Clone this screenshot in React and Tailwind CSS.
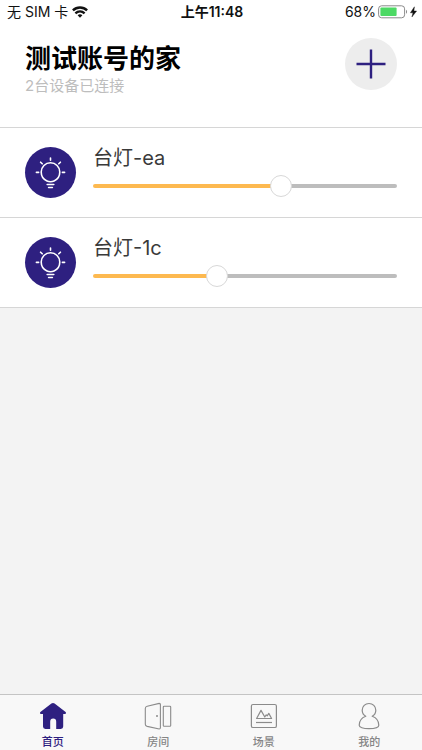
import { useState } from "react";

function WifiIcon() {
  return (
    <svg width="16" height="12" viewBox="0 0 16 12" fill="none" stroke="#111" strokeWidth="2.4" aria-hidden="true">
      <path d="M0.9 4.4C4.9 0.5 11.1 0.5 15.1 4.4" />
      <path d="M3.4 7.3C6.1 4.8 9.9 4.8 12.6 7.3" />
      <path d="M5.6 9.2C7.1 7.9 8.9 7.9 10.4 9.2L8 11.7Z" fill="#111" stroke="none" />
    </svg>
  );
}

function BatteryIcon() {
  return (
    <svg width="39" height="14" viewBox="0 0 39 14" fill="none" aria-hidden="true">
      <rect x="0.6" y="0.8" width="26" height="12" rx="3" fill="#fff" stroke="#8a8a8a" />
      <rect x="2.4" y="2.6" width="16.2" height="8.4" rx="1" fill="#4cd964" />
      <path d="M28 4.8C29.4 5.4 29.4 8.2 28 8.8Z" fill="#8a8a8a" />
      <path d="M36.4 1.8L32.4 7.8H35L33.9 12L38.6 6H35.9Z" fill="#111" stroke="#111" strokeWidth="0.4" />
    </svg>
  );
}

function BulbIcon() {
  return (
    <svg width="51" height="51" viewBox="0 0 51 51" fill="none" stroke="#fff" strokeWidth="1.6" strokeLinecap="round" aria-hidden="true">
      <path d="M25.5 15.8A9.3 9.3 0 0 1 34.8 25.1C34.8 29.2 32.4 32.6 29 34Q27.4 34.7 25.5 34.7T22 34C18.6 32.6 16.2 29.2 16.2 25.1A9.3 9.3 0 0 1 25.5 15.8Z" strokeLinejoin="round" />
      <path d="M22.2 37.5H28.8M23.6 40.5H27.4" />
      <path d="M25.5 11V13.2M15.6 15.2L17.2 16.8M35.4 15.2L33.8 16.8M11.4 25.4H13.6M37.4 25.4H39.6" />
    </svg>
  );
}

function HomeIcon() {
  return (
    <svg width="28" height="28" viewBox="0 0 28 28" aria-hidden="true">
      <path d="M14 1C14.6 1 15.1 1.2 15.6 1.6L26.6 9.9C27.4 10.7 27.1 11.9 26 11.9H24.2V24.6Q24.2 27 21.8 27H17.2V19.8Q17.2 16.6 14.2 16.6T11.2 19.8V27H6.4Q4 27 4 24.6V11.9H2C0.9 11.9 0.6 10.7 1.4 9.9L12.4 1.6C12.9 1.2 13.4 1 14 1Z" fill="#2e2080" />
    </svg>
  );
}

function DoorIcon() {
  return (
    <svg width="28" height="28" viewBox="0 0 28 28" fill="none" stroke="#8b8b8b" strokeWidth="1.1" strokeLinejoin="round" aria-hidden="true">
      <path d="M15.2 1.4L3.2 4.2Q1.3 4.7 1.3 6.4V22.2Q1.3 23.9 3.2 24.4L15.2 27Q16.4 27 16.4 25.8V2.6Q16.4 1.4 15.2 1.4Z" />
      <rect x="19.3" y="4.3" width="7.4" height="20" rx="0.8" />
      <circle cx="13" cy="14" r="1" fill="#8b8b8b" stroke="none" />
    </svg>
  );
}

function SceneIcon() {
  return (
    <svg width="28" height="28" viewBox="0 0 28 28" fill="none" stroke="#8b8b8b" strokeWidth="1.2" strokeLinejoin="round" aria-hidden="true">
      <rect x="1.4" y="2.5" width="25" height="23" rx="1.6" />
      <path d="M6.6 16.5L11 8.4L14.8 15L16.2 12.8L17.2 13.8L18.8 11.4L21.6 16.5Z" />
      <path d="M6 20.5H22" />
    </svg>
  );
}

function PersonIcon() {
  return (
    <svg width="28" height="28" viewBox="0 0 28 28" fill="none" stroke="#8b8b8b" strokeWidth="1.2" strokeLinejoin="round" aria-hidden="true">
      <path d="M10.8 14.2C8.5 13 7.2 10.7 7.2 8.2C7.2 4.3 10.2 1.5 14 1.5S20.8 4.3 20.8 8.2C20.8 10.7 19.5 13 17.2 14.2C21.6 15.8 23.8 19.6 23.8 23.2C23.8 25.4 20 26.6 14 26.6S4.2 25.4 4.2 23.2C4.2 19.6 6.4 15.8 10.8 14.2Z" />
    </svg>
  );
}

function Lamp({ id, name, initial }) {
  const [value, setValue] = useState(initial);
  return (
    <li className="flex h-[90px] items-center gap-[17px] border-b border-[#d6d6d6] px-[25px]">
      <span className="size-[51px] shrink-0 rounded-full bg-[#2e2080]">
        <BulbIcon />
      </span>
      <div className="flex grow flex-col gap-0.5 pb-[5px]">
        <label htmlFor={id} className="text-xl leading-[30px] text-[#3a3a3a]">
          {name}
        </label>
        <input
          id={id}
          type="range"
          min="0"
          max="1000"
          value={value}
          onChange={(e) => setValue(Number(e.target.value))}
          style={{ "--fill": value / 1000 }}
          className="block h-[22px] w-full cursor-pointer appearance-none bg-transparent [&::-webkit-slider-runnable-track]:h-1 [&::-webkit-slider-runnable-track]:rounded-full [&::-webkit-slider-runnable-track]:bg-[linear-gradient(to_right,#fdb950_calc(11px+(100%-22px)*var(--fill)),#bdbdbd_0)] [&::-webkit-slider-thumb]:mt-[-9px] [&::-webkit-slider-thumb]:size-[22px] [&::-webkit-slider-thumb]:appearance-none [&::-webkit-slider-thumb]:rounded-full [&::-webkit-slider-thumb]:border [&::-webkit-slider-thumb]:border-[#d8d8d8] [&::-webkit-slider-thumb]:bg-white"
        />
      </div>
    </li>
  );
}

const tabs = [
  { label: "首页", Icon: HomeIcon, active: true },
  { label: "房间", Icon: DoorIcon },
  { label: "场景", Icon: SceneIcon },
  { label: "我的", Icon: PersonIcon },
];

export default function App() {
  return (
    <div className="flex min-h-screen flex-col bg-[#f3f3f3] font-[Inter,'Noto_Sans_CJK_SC',sans-serif]">
      <div className="grid h-6 grid-cols-[1fr_auto_1fr] items-center bg-white pr-[5px] pl-[7px] text-sm text-[#111]">
        <span className="flex items-center gap-1">
          无 SIM 卡
          <WifiIcon />
        </span>
        <span className="font-semibold">上午11:48</span>
        <span className="flex items-center justify-end gap-0.5">
          68%
          <BatteryIcon />
        </span>
      </div>

      <header className="flex h-[104px] items-start justify-between border-b border-[#d6d6d6] bg-white px-[25px] pt-[14px]">
        <div className="pt-1.5">
          <h1 className="text-[26px] leading-[30px] font-semibold text-black">测试账号的家</h1>
          <p className="text-[15px] leading-6 text-[#bdbdbd]">2台设备已连接</p>
        </div>
        <button type="button" aria-label="添加设备" className="flex size-[52px] items-center justify-center rounded-full bg-[#ededed]">
          <svg width="30" height="30" viewBox="0 0 30 30" stroke="#2e2080" strokeWidth="2.4" aria-hidden="true">
            <path d="M15 0.5V29.5M0.5 15H29.5" />
          </svg>
        </button>
      </header>

      <main className="grow">
        <ul className="bg-white">
          <Lamp id="lamp-ea" name="台灯-ea" initial={626} />
          <Lamp id="lamp-1c" name="台灯-1c" initial={402} />
        </ul>
      </main>

      <nav className="grid h-14 grid-cols-4 border-t border-[#c4c4c4] bg-[#f8f8f8]">
        {tabs.map(({ label, Icon, active }) => (
          <a
            key={label}
            href="#"
            aria-current={active ? "page" : undefined}
            className={`flex flex-col items-center gap-1 pt-[7px] text-[11px] leading-4 font-medium ${active ? "text-[#2e2080]" : "text-[#858585]"}`}
          >
            <Icon />
            {label}
          </a>
        ))}
      </nav>
    </div>
  );
}
